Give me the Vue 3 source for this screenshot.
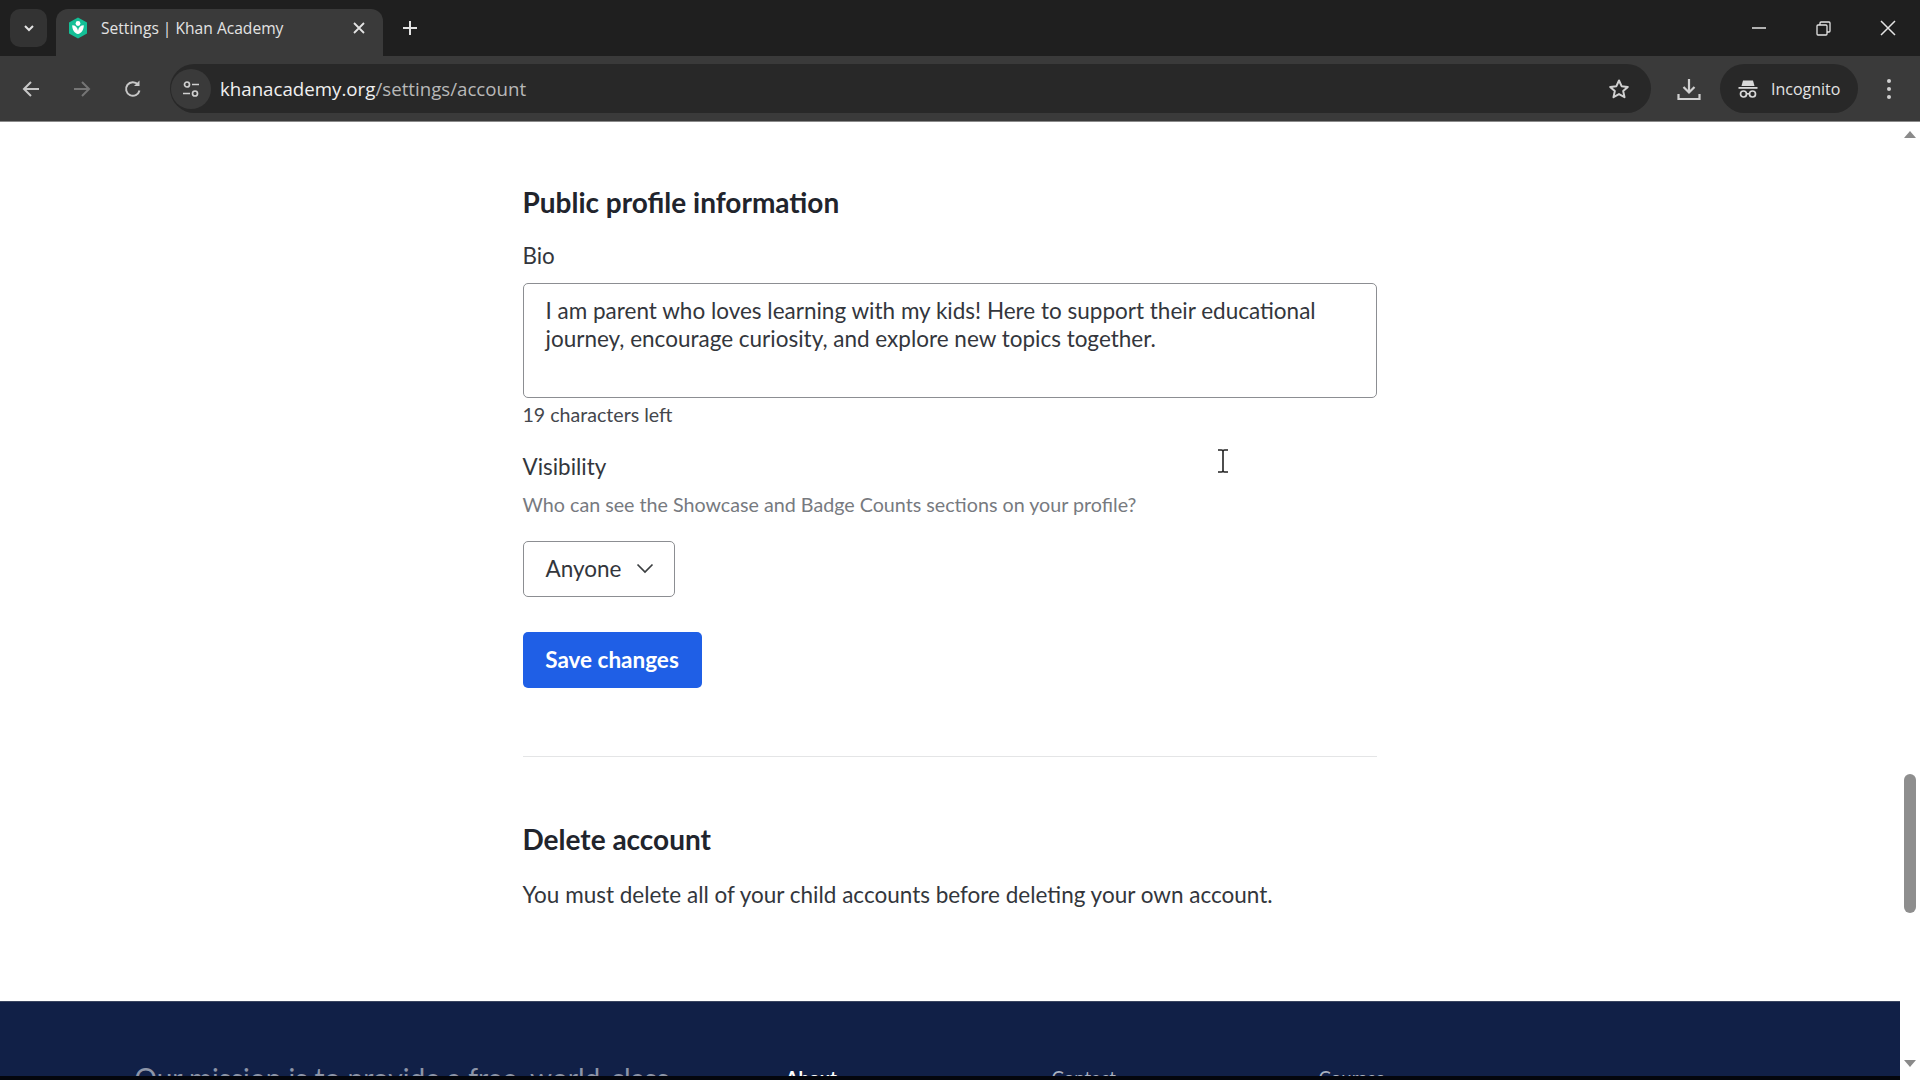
<script setup>
// Trang cài đặt Khan Academy trong cửa sổ Chrome ẩn danh
const bio = 'I am parent who loves learning with my kids! Here to support their educational journey, encourage curiosity, and explore new topics together.'
const footerLinks = [
  { text: 'About', strong: true },
  { text: 'Contact', strong: false },
  { text: 'Courses', strong: false },
]
</script>

<template>
  <div class="window">
    <header class="tabstrip">
      <button class="tab-list">
        <svg width="14" height="14" viewBox="0 0 14 14"><path d="M3 5l4 4 4-4" fill="none" stroke="#e3e3e3" stroke-width="2" /></svg>
      </button>
      <div class="tab">
        <svg class="favicon" width="20" height="22" viewBox="0 0 20 22">
          <path d="M10 0.5l9 5v11l-9 5-9-5v-11z" fill="#14bf96" />
          <circle cx="10" cy="6.5" r="2.4" fill="#fff" />
          <path d="M4.2 8.2c3.2 0 5.3 2 5.8 5.6 0.5-3.6 2.6-5.6 5.8-5.6 0 4.800-2.500 8-5.800 8.800-3.300-0.800-5.800-4-5.800-8.800z" fill="#fff" />
        </svg>
        <span class="tab-title">Settings | Khan Academy</span>
        <svg class="tab-close" width="14" height="14" viewBox="0 0 14 14"><path d="M2 2l10 10M12 2L2 12" stroke="#e3e3e3" stroke-width="1.8" /></svg>
      </div>
      <svg class="new-tab" width="16" height="16" viewBox="0 0 16 16"><path d="M8 1v14M1 8h14" stroke="#e3e3e3" stroke-width="2" /></svg>
      <div class="window-controls">
        <svg width="14" height="14" viewBox="0 0 14 14"><path d="M0 7h14" stroke="#e3e3e3" stroke-width="1.500" /></svg>
        <svg width="15" height="15" viewBox="0 0 15 15" fill="none" stroke="#e3e3e3" stroke-width="1.300">
          <rect x="1" y="4" width="10" height="10" rx="1" />
          <path d="M4 4V2a1 1 0 0 1 1-1h8a1 1 0 0 1 1 1v8a1 1 0 0 1-1 1h-2" />
        </svg>
        <svg width="16" height="16" viewBox="0 0 16 16"><path d="M1 1l14 14M15 1L1 15" stroke="#e3e3e3" stroke-width="1.500" /></svg>
      </div>
    </header>

    <nav class="toolbar">
      <button class="nav-btn">
        <svg width="20" height="20" viewBox="0 0 20 20" fill="none" stroke="#c7c7c7" stroke-width="2"><path d="M18 10H3M10 3l-7 7 7 7" /></svg>
      </button>
      <button class="nav-btn">
        <svg width="20" height="20" viewBox="0 0 20 20" fill="none" stroke="#757575" stroke-width="2"><path d="M2 10h15M10 3l7 7-7 7" /></svg>
      </button>
      <button class="nav-btn reload">
        <svg width="20" height="20" viewBox="0 0 20 20" fill="none" stroke="#c7c7c7" stroke-width="2">
          <path d="M16.500 11.500A6.800 6.800 0 1 1 15 5.500" />
          <path d="M16.500 1.500v5.500H11" fill="#c7c7c7" stroke="none" />
        </svg>
      </button>
      <div class="omnibox">
        <span class="site-info">
          <svg width="20" height="20" viewBox="0 0 20 20" fill="none" stroke="#d0d0d0" stroke-width="1.700">
            <circle cx="6" cy="5.500" r="2.500" /><path d="M11 5.500h7M2 14.500h7" />
            <circle cx="14" cy="14.500" r="2.500" />
          </svg>
        </span>
        <span class="url"><span class="url-host">khanacademy.org</span>/settings/account</span>
        <svg class="star" width="22" height="22" viewBox="0 0 22 22" fill="none" stroke="#d0d0d0" stroke-width="2">
          <path d="M11 2.500l2.600 5.700 6.200 0.700-4.600 4.200 1.300 6.100L11 16.100l-5.500 3.100 1.300-6.100-4.600-4.200 6.200-0.700z" stroke-linejoin="round" />
        </svg>
      </div>
      <button class="download">
        <svg width="24" height="24" viewBox="0 0 24 24" fill="none" stroke="#d0d0d0" stroke-width="2.200">
          <path d="M12 2v13M6.500 10l5.500 5.500 5.500-5.500M1.500 17v5h21v-5" />
        </svg>
      </button>
      <div class="incognito">
        <svg width="20" height="20" viewBox="0 0 20 20" fill="#d8d8d8">
          <path d="M5 1.500h10l1.500 5.500h-13z" />
          <rect x="0.500" y="8" width="19" height="1.800" />
          <circle cx="5.500" cy="15" r="3" fill="none" stroke="#d8d8d8" stroke-width="1.700" />
          <circle cx="14.500" cy="15" r="3" fill="none" stroke="#d8d8d8" stroke-width="1.700" />
          <rect x="8" y="14" width="4" height="1.600" />
        </svg>
        <span>Incognito</span>
      </div>
      <button class="menu-btn">
        <span></span><span></span><span></span>
      </button>
    </nav>

    <div class="viewport">
      <main class="page">
        <div class="content">
          <section class="profile">
            <h2 class="section-title">Public profile information</h2>
            <div class="field-label bio-label">Bio</div>
            <div class="bio-box">{{ bio }}</div>
            <div class="chars-left">19 characters left</div>
            <div class="field-label visibility-label">Visibility</div>
            <div class="hint">Who can see the Showcase and Badge Counts sections on your profile?</div>
            <div class="select">
              <span>Anyone</span>
              <svg width="18" height="11" viewBox="0 0 18 11" fill="none" stroke="#3b3e40" stroke-width="1.700"><path d="M1.500 1.500L9 9l7.500-7.500" /></svg>
            </div>
            <button class="save-btn">Save changes</button>
          </section>

          <hr class="divider" />

          <section class="danger">
            <h2 class="section-title">Delete account</h2>
            <p class="delete-text">You must delete all of your child accounts before deleting your own account.</p>
          </section>
        </div>

        <footer class="footer">
          <div class="mission">Our mission is to provide a free, world-class</div>
          <div
            v-for="link in footerLinks"
            :key="link.text"
            class="footer-col"
            :class="{ strong: link.strong }"
          >{{ link.text }}</div>
        </footer>
      </main>

      <aside class="scrollbar">
        <span class="arrow-up"></span>
        <span class="thumb"></span>
        <span class="arrow-down"></span>
      </aside>

      <svg class="text-cursor" width="12" height="24" viewBox="0 0 12 24" fill="none" stroke="#222" stroke-width="1.600">
        <path d="M1 1h3.500q1.500 0 1.500 1.500v19q0 1.500-1.500 1.500H1M11 1H7.500Q6 1 6 2.500M6 21.500q0 1.500 1.500 1.500H11" />
      </svg>
    </div>
  </div>
</template>

<style scoped>
.window {
  width: 1920px;
  height: 1080px;
  display: flex;
  flex-direction: column;
  overflow: hidden;
  background: #fff;
  font-family: Lato, "Liberation Sans", sans-serif;
}

button {
  border: 0;
  padding: 0;
  background: none;
  display: flex;
  align-items: center;
  justify-content: center;
}

.tabstrip {
  height: 56px;
  flex: 0 0 auto;
  display: flex;
  align-items: flex-end;
  background: #1f1f1f;
  color: #e3e3e3;
  font-family: "Open Sans", sans-serif;
}

.tab-list {
  width: 37px;
  height: 38px;
  margin: 0 9px 9px 10px;
  border-radius: 10px;
  background: #333;
}

.tab {
  width: 327px;
  height: 47px;
  box-sizing: border-box;
  padding: 0 17px 9px 12px;
  display: flex;
  align-items: center;
  border-radius: 12px 12px 0 0;
  background: #3a3a3a;
}

.tab-title {
  flex: 1;
  margin-left: 13px;
  font-size: 15.600px;
  white-space: nowrap;
}

.new-tab {
  margin: 0 0 20px 19px;
}

.window-controls {
  margin-left: auto;
  width: 144px;
  height: 56px;
  padding-right: 24px;
  display: flex;
  align-items: center;
  justify-content: space-between;
}

.toolbar {
  height: 66px;
  flex: 0 0 auto;
  box-sizing: border-box;
  padding-left: 5px;
  display: flex;
  align-items: center;
  background: #3a3a3a;
  border-bottom: 1px solid #8a8a8a;
}

.nav-btn {
  width: 51px;
  height: 48px;
}

.omnibox {
  width: 1481px;
  height: 49px;
  margin-left: 12px;
  box-sizing: border-box;
  padding: 0 21px 0 1px;
  display: flex;
  align-items: center;
  border-radius: 25px;
  background: #282828;
  font-family: "Open Sans", sans-serif;
}

.site-info {
  width: 40px;
  height: 40px;
  border-radius: 50%;
  background: #3a3a3a;
  display: flex;
  align-items: center;
  justify-content: center;
}

.url {
  flex: 1;
  margin-left: 9px;
  padding-bottom: 1px;
  font-size: 18.700px;
  color: #b8b8b8;
}

.url-host {
  color: #f0f0f0;
}

.download {
  width: 62px;
  height: 48px;
  margin-left: 7px;
}

.incognito {
  width: 138px;
  height: 49px;
  box-sizing: border-box;
  padding-left: 18px;
  display: flex;
  align-items: center;
  gap: 13px;
  border-radius: 25px;
  background: #282828;
  color: #e3e3e3;
  font-family: "Open Sans", sans-serif;
  font-size: 16px;
}

.menu-btn {
  width: 62px;
  height: 48px;
  flex-direction: column;
  gap: 4px;
}

.menu-btn span {
  width: 4px;
  height: 4px;
  border-radius: 50%;
  background: #d0d0d0;
}

.viewport {
  position: relative;
  flex: 1;
  min-height: 0;
  display: flex;
}

.page {
  flex: 1;
  min-width: 0;
  display: flex;
  flex-direction: column;
  background: #04060d;
}

.content {
  height: 879px;
  flex: 0 0 auto;
  box-sizing: border-box;
  padding: 0 523px 0 522.500px;
  background: #fff;
  color: #21242c;
}

.section-title {
  margin: 0;
  font-size: 28px;
  line-height: 32px;
  font-weight: 700;
}

.profile {
  padding-top: 64px;
}

.field-label {
  font-size: 22.400px;
  line-height: 24px;
  color: #33363c;
}

.bio-label {
  margin-top: 26px;
}

.bio-box {
  height: 115px;
  margin-top: 15px;
  box-sizing: border-box;
  padding: 13px 22px;
  border: 1.500px solid #8c8e92;
  border-radius: 5px;
  font-size: 22.500px;
  line-height: 28px;
  color: #33363c;
}

.chars-left {
  margin-top: 6px;
  font-size: 19.600px;
  line-height: 22px;
  color: #44474d;
}

.visibility-label {
  margin-top: 29px;
}

.hint {
  margin-top: 14px;
  font-size: 19.700px;
  line-height: 24px;
  color: #777a7f;
}

.select {
  width: 152px;
  height: 56px;
  margin-top: 24px;
  box-sizing: border-box;
  padding: 0 20px 2px 22px;
  display: flex;
  align-items: center;
  justify-content: space-between;
  border: 1.500px solid #8c8e92;
  border-radius: 5px;
  font-size: 22.500px;
  color: #33363c;
}

.save-btn {
  width: 179px;
  height: 56px;
  margin-top: 35px;
  padding-bottom: 2px;
  border-radius: 5px;
  background: #1f5fe6;
  color: #fff;
  font-family: inherit;
  font-size: 22.500px;
  font-weight: 700;
}

.divider {
  height: 1px;
  margin: 68px 0 0;
  border: 0;
  background: #e4e5e6;
}

.danger {
  padding-top: 66px;
}

.delete-text {
  margin: 27px 0 0;
  font-size: 22.500px;
  line-height: 26px;
  color: #33363c;
}

.footer {
  flex: 1;
  min-height: 0;
  margin-bottom: 4px;
  padding-left: 134.500px;
  display: flex;
  overflow: hidden;
  background: #112047;
  border-top: 1px solid #3a4560;
  font-size: 28px;
  color: #8d95a8;
}

.mission,
.footer-col {
  margin-top: 61px;
  line-height: 30px;
  white-space: nowrap;
  height: 30px;
}

.mission {
  width: 651px;
}

.footer-col {
  width: 267px;
  font-size: 18.600px;
  color: #aab1c0;
}

.footer-col.strong {
  width: 266px;
  font-weight: 700;
  color: #fff;
}

.scrollbar {
  position: relative;
  width: 20px;
  flex: 0 0 auto;
  background: #fff;
}

.arrow-up,
.arrow-down {
  position: absolute;
  left: 4px;
  width: 0;
  height: 0;
  border-left: 6px solid transparent;
  border-right: 6px solid transparent;
}

.arrow-up {
  top: 9px;
  border-bottom: 7px solid #8a8a8a;
}

.arrow-down {
  bottom: 13px;
  border-top: 7px solid #8a8a8a;
}

.thumb {
  position: absolute;
  top: 652px;
  left: 4px;
  width: 12px;
  height: 139px;
  border-radius: 6px;
  background: #8e8e8e;
}

.text-cursor {
  position: absolute;
  left: 1217px;
  top: 327px;
}
</style>

<style>
html, body {
  margin: 0;
  overflow: hidden;
}
</style>
